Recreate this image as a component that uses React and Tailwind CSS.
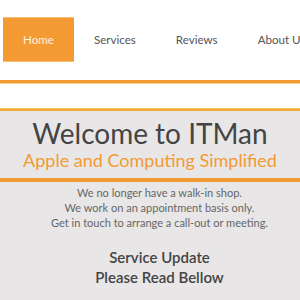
export default function App() {
  const font = { fontFamily: '"Lato", "Open Sans", sans-serif' };
  return (
    <div className="w-[300px] h-[300px] overflow-hidden bg-white" style={font}>
      <div className="pt-[17px] pl-[3px] flex whitespace-nowrap text-[11.6px] text-[#555]">
        <div className="h-[45px] px-[20px] flex items-center bg-[#f39a33] text-[#fdf0e0] border-y border-[#f7bb73]">Home</div>
        <div className="h-[45px] px-[20px] flex items-center">Services</div>
        <div className="h-[45px] px-[20px] flex items-center">Reviews</div>
        <div className="h-[45px] px-[20px] flex items-center">About Us</div>
      </div>
      <div className="mt-[18px] h-[3px] bg-[#f39a33]"></div>
      <div className="h-[1px] bg-[#f8c890]"></div>
      <div className="h-[24px]"></div>
      <div className="h-[1px] bg-[#f5c26a]"></div>
      <div className="h-[2px] bg-[#f0a838]"></div>
      <div className="bg-[#e8e6e7] h-[200px] flex flex-col items-center">
        <div className="mt-[7px] text-[28px] leading-[31px] text-[#444]">Welcome to ITMan</div>
        <div className="text-[18px] leading-[22px] text-[#f39a33]">Apple and Computing Simplified</div>
        <div className="mt-[7px] self-stretch h-[4px] bg-[#f39a33]"></div>
        <div className="self-stretch pl-[19px] flex flex-col items-center">
          <div className="mt-[3px] text-[11px] leading-[15px] text-[#666] text-center">
            <div>We no longer have a walk-in shop.</div>
            <div>We work on an appointment basis only.</div>
            <div>Get in touch to arrange a call-out or meeting.</div>
          </div>
          <div className="mt-[17px] text-[15px] leading-[20px] font-semibold text-[#444] text-center">
            <div>Service Update</div>
            <div>Please Read Bellow</div>
          </div>
        </div>
      </div>
    </div>
  );
}
